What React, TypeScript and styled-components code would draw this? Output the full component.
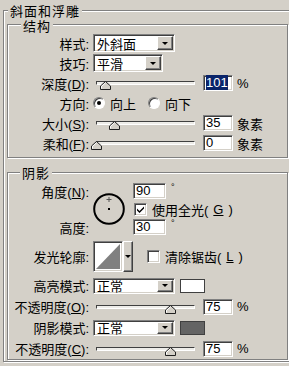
import React from 'react';
import styled, { createGlobalStyle } from 'styled-components';

const GlobalStyle = createGlobalStyle`
  html, body {
    margin: 0;
    padding: 0;
    background: #d4d0c8;
  }
  body {
    font-family: "Liberation Sans", "Noto Sans CJK SC", sans-serif;
    font-size: 13px;
    color: #000;
  }
`;

const sunken = `
  border: 1px solid;
  border-color: #808080 #fff #fff #808080;
  box-shadow: inset 1px 1px 0 #404040, inset -1px -1px 0 #d4d0c8;
`;

const raised = `
  background: #d4d0c8;
  border: 1px solid;
  border-color: #fff #404040 #404040 #fff;
  box-shadow: inset -1px -1px 0 #808080;
`;

const Window = styled.div`
  width: 289px;
  height: 366px;
  overflow: hidden;
  background: #d4d0c8;
  padding: 10px 0 0 3px;
  box-sizing: border-box;
`;

// etched group box, title laid over its top edge
const Group = styled.div<{ $w: number; $pad: string; $top?: number }>`
  position: relative;
  width: ${p => p.$w}px;
  box-sizing: border-box;
  margin-top: ${p => p.$top ?? 0}px;
  padding: ${p => p.$pad};
  border: 1px solid #808080;
  box-shadow: inset 1px 1px 0 #fff, 1px 1px 0 #fff;
`;

const Title = styled.span<{ $left: number; $y: number }>`
  position: absolute;
  top: ${p => p.$y}px;
  left: ${p => p.$left}px;
  padding: 0 2px;
  height: 12px;
  line-height: 12px;
  font-size: 13px;
  letter-spacing: 1px;
  background: #d4d0c8;
  white-space: nowrap;
`;

const Row = styled.div<{ $h?: number }>`
  display: grid;
  grid-template-columns: 82px auto;
  column-gap: 3px;
  align-items: center;
  height: ${p => p.$h ?? 20}px;
`;

const Label = styled.span`
  text-align: right;
  white-space: nowrap;
  padding-right: 1px;
`;

const Mn = styled.span`
  text-decoration: underline;
`;

const Controls = styled.div`
  display: flex;
  align-items: center;
`;

const SelectBox = styled.div<{ $w: number; $h: number }>`
  width: ${p => p.$w}px;
  height: ${p => p.$h}px;
  box-sizing: border-box;
  display: flex;
  padding: 1px;
  background: #fff;
  ${sunken}
`;

const SelectText = styled.span`
  flex: 1;
  display: flex;
  align-items: center;
  padding-left: 2px;
  white-space: nowrap;
`;

const DropButton = styled.span<{ $w?: number }>`
  width: ${p => p.$w ?? 16}px;
  box-sizing: border-box;
  display: flex;
  align-items: center;
  justify-content: center;
  ${raised}
  &::after {
    content: '';
    border-left: 3px solid transparent;
    border-right: 3px solid transparent;
    border-top: 3px solid #000;
  }
`;

const Field = styled.div<{ $w?: number; $ml?: number }>`
  width: ${p => p.$w ?? 30}px;
  height: 16px;
  box-sizing: border-box;
  margin-left: ${p => p.$ml ?? 0}px;
  background: #fff;
  ${sunken}
  padding-left: 2px;
  line-height: 14px;
  white-space: nowrap;
`;

const Selected = styled.span`
  background: #0a246a;
  color: #fff;
`;

const Unit = styled.span`
  margin-left: 4px;
  white-space: nowrap;
`;

const SliderBox = styled.div`
  position: relative;
  width: 105px;
  height: 14px;
`;

const Track = styled.div`
  position: absolute;
  left: 3px;
  top: 5px;
  width: 99px;
  height: 4px;
  box-sizing: border-box;
  background: #eeede9;
  border: 1px solid;
  border-color: #404040 #fff #fff #404040;
`;

const Thumb = styled.svg`
  position: absolute;
  top: 5px;
`;

const RadioItem = styled.span<{ $ml?: number }>`
  display: flex;
  align-items: center;
  gap: 5px;
  margin-left: ${p => p.$ml ?? 0}px;
`;

const Radio = styled.span<{ $on?: boolean }>`
  width: 12px;
  height: 12px;
  box-sizing: border-box;
  border-radius: 50%;
  background: #fff;
  border: 1px solid;
  border-color: #808080 #fff #fff #808080;
  box-shadow: inset 1px 1px 0 #404040;
  display: flex;
  align-items: center;
  justify-content: center;
  &::after {
    content: '';
    width: 4px;
    height: 4px;
    border-radius: 50%;
    background: ${p => (p.$on ? '#000' : 'transparent')};
  }
`;

const Check = styled.span`
  width: 13px;
  height: 13px;
  box-sizing: border-box;
  background: #fff;
  ${sunken}
  display: flex;
  align-items: center;
  justify-content: center;
`;

const CheckItem = styled.span<{ $ml?: number }>`
  display: flex;
  align-items: center;
  gap: 5px;
  margin-left: ${p => p.$ml ?? 0}px;
  white-space: nowrap;
`;

const AngleGrid = styled.div`
  display: grid;
  grid-template-columns: 82px 37px auto;
  grid-template-rows: 18px 18px 18px;
  column-gap: 3px;
  align-items: center;
`;

const Dial = styled.svg`
  grid-column: 2;
  grid-row: 1 / 4;
`;

const Degree = styled.span`
  align-self: flex-start;
  font-size: 9px;
  line-height: 9px;
  margin-left: 5px;
`;

const ContourPicker = styled.div`
  display: flex;
  height: 31px;
`;

const ContourThumb = styled.div`
  width: 30px;
  height: 31px;
  box-sizing: border-box;
  background: #fff;
  ${sunken}
  padding: 2px;
`;

const Swatch = styled.div<{ $color: string }>`
  width: 25px;
  height: 14px;
  box-sizing: border-box;
  margin-left: 5px;
  background: ${p => p.$color};
  border: 1px solid #404040;
`;

const Select = ({ value, w, h }: { value: string; w: number; h: number }) => (
  <SelectBox $w={w} $h={h}>
    <SelectText>{value}</SelectText>
    <DropButton />
  </SelectBox>
);

const Slider = ({ tip }: { tip: number }) => (
  <SliderBox>
    <Track />
    <Thumb width="11" height="9" viewBox="0 0 11 9" style={{ left: tip - 5 }}>
      <polygon points="5.5,0.5 10.5,5 10.5,8.5 0.5,8.5 0.5,5" fill="#d4d0c8" stroke="#202020" strokeWidth="1" />
      <polyline points="1.5,7.5 1.5,5.4 5.5,1.8" fill="none" stroke="#fff" strokeWidth="1" />
    </Thumb>
  </SliderBox>
);

const SliderRow = ({ label, tip, value, unit, selected, h }: { label: React.ReactNode; tip: number; value: string; unit: string; selected?: boolean; h?: number }) => (
  <Row $h={h}>
    <Label>{label}</Label>
    <Controls>
      <Slider tip={tip} />
      <Field $ml={5}>{selected ? <Selected>{value}</Selected> : value}</Field>
      <Unit>{unit}</Unit>
    </Controls>
  </Row>
);

const CheckMark = () => (
  <svg width="9" height="9" viewBox="0 0 9 9">
    <path d="M1 3.5 L3.5 6 L8 1.5 L8 3.5 L3.5 8 L1 5.5 Z" fill="#000" />
  </svg>
);

export default function App() {
  return (
    <>
      <GlobalStyle />
      <Window>
        <Group $w={300} $pad="13px 0 1px 3px">
          <Title $left={4} $y={-5}>斜面和浮雕</Title>

          <Group $w={281} $pad="8px 0 4px 0">
            <Title $left={13} $y={-4}>结构</Title>
            <Row>
              <Label>样式:</Label>
              <Select value="外斜面" w={82} h={18} />
            </Row>
            <Row>
              <Label>技巧:</Label>
              <Select value="平滑" w={70} h={18} />
            </Row>
            <SliderRow label={<>深度(<Mn>D</Mn>):</>} tip={12} value="101" unit="%" selected />
            <Row>
              <Label>方向:</Label>
              <Controls>
                <RadioItem><Radio $on />向上</RadioItem>
                <RadioItem $ml={12}><Radio />向下</RadioItem>
              </Controls>
            </Row>
            <SliderRow label={<>大小(<Mn>S</Mn>):</>} tip={21} value="35" unit="象素" />
            <SliderRow label={<>柔和(<Mn>F</Mn>):</>} tip={3} value="0" unit="象素" />
          </Group>

          <Group $w={281} $pad="9px 0 0 0" $top={14}>
            <Title $left={12} $y={-5}>阴影</Title>
            <AngleGrid>
              <Label>角度(<Mn>N</Mn>):</Label>
              <Dial width="32" height="32" viewBox="0 0 32 32">
                <circle cx="16" cy="16" r="14.8" fill="none" stroke="#000" strokeWidth="2" />
                <rect x="15" y="15" width="2" height="2" fill="#000" />
                <path d="M13.5 6.5 H18.5 M16 4 V9" stroke="#555" strokeWidth="1" />
              </Dial>
              <Controls>
                <Field $w={33}>90</Field>
                <Degree>°</Degree>
              </Controls>
              <CheckItem style={{ gridColumn: 3, gridRow: 2, marginLeft: 1 }}>
                <Check><CheckMark /></Check>
                使用全光(<Mn>G</Mn>)
              </CheckItem>
              <Label style={{ gridColumn: 1, gridRow: 3 }}>高度:</Label>
              <Controls style={{ gridColumn: 3, gridRow: 3 }}>
                <Field $w={33}>30</Field>
                <Degree>°</Degree>
              </Controls>
            </AngleGrid>

            <Row $h={37} style={{ marginTop: 2 }}>
              <Label>发光轮廓:</Label>
              <Controls>
                <ContourPicker>
                  <ContourThumb>
                    <svg width="24" height="25" viewBox="0 0 24 25" style={{ display: 'block' }}>
                      <polygon points="0,25 24,0 24,25" fill="#808080" />
                    </svg>
                  </ContourThumb>
                  <DropButton $w={10} />
                </ContourPicker>
                <CheckItem $ml={14}>
                  <Check />
                  清除锯齿(<Mn>L</Mn>)
                </CheckItem>
              </Controls>
            </Row>

            <Row $h={21}>
              <Label>高亮模式:</Label>
              <Controls>
                <Select value="正常" w={82} h={16} />
                <Swatch $color="#ffffff" />
              </Controls>
            </Row>
            <SliderRow h={21} label={<>不透明度(<Mn>O</Mn>):</>} tip={77} value="75" unit="%" />
            <Row $h={21}>
              <Label>阴影模式:</Label>
              <Controls>
                <Select value="正常" w={82} h={16} />
                <Swatch $color="#646464" />
              </Controls>
            </Row>
            <SliderRow h={21} label={<>不透明度(<Mn>C</Mn>):</>} tip={77} value="75" unit="%" />
          </Group>
        </Group>
      </Window>
    </>
  );
}
